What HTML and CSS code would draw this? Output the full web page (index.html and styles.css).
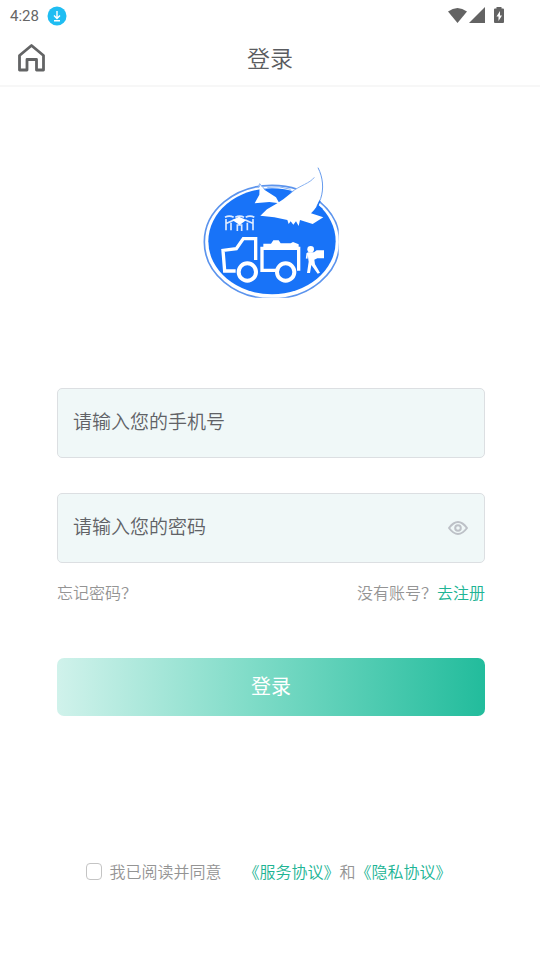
FILE: index.html
```
<!DOCTYPE html>
<html lang="zh-CN">
<head>
  <meta charset="UTF-8">
  <meta name="viewport" content="width=device-width, initial-scale=1.0">
  <title>登录</title>
  <link rel="stylesheet" href="styles.css">
</head>
<body>

  <div class="status-bar">
    <div class="status-left">
      <span class="time">4:28</span>
      <svg class="download" viewBox="0 0 20 20" width="20" height="20">
        <circle cx="10" cy="10" r="9.5" fill="#1fbdf2"/>
        <path d="M10 5v7M7 9.5l3 3 3-3M7 14.7h6" fill="none" stroke="#fff" stroke-width="1.4"/>
      </svg>
    </div>
    <svg class="status-icons" viewBox="0 0 57 18" width="57" height="18" fill="#636363">
      <path d="M0 4.5Q9.5-2.5 19 4.5L9.5 16z"/>
      <path d="M37 0v16H21z"/>
      <path d="M48.500 0h5v1.500h1.500q1 0 1 1V15q0 1-1 1h-8q-1 0-1-1V2.500q0-1 1-1h1.500z"/>
      <path d="M52 4l-3.500 5.500h2V14l3.500-5.500h-2z" fill="#fff"/>
    </svg>
  </div>

  <header class="header">
    <a class="home" href="#" aria-label="首页">
      <svg viewBox="0 0 28 28" width="28" height="28">
        <path d="M2.500 11.500L14.500 1.500l12 10V26h-7V15.500H10V26H2.500z" fill="none" stroke="#636465" stroke-width="2.800" stroke-linejoin="round"/>
      </svg>
    </a>
    <h1 class="title">登录</h1>
  </header>

  <main class="container">
    <svg class="logo" viewBox="0 0 450 435" width="150" height="145">
      <!-- oval badge -->
      <clipPath id="badge"><path d="M0 0h428v413H0z"/></clipPath>
      <g clip-path="url(#badge)">
        <ellipse cx="228" cy="246" rx="203" ry="170" fill="#fff" stroke="#5c94ed" stroke-width="5"/>
        <ellipse cx="228" cy="244" rx="191" ry="159" fill="#1873f8"/>
      </g>
      <!-- bird -->
      <path d="M191 73L206 90 240 112 250 130 220 126 176 130 190 104z" fill="#fff"/>
      <path d="M366 22C380 50 384 85 373 116 368 134 357 148 345 160L382 172 350 192 312 180 308 198 300 184 292 194 284 184 278 192 274 180 235 172 193 167 213 148 240 132 262 118 292 94C320 72 355 58 366 22z" fill="#fff"/>
      <path d="M366 23C381 52 384 86 374 116L362 140" fill="none" stroke="#669bed" stroke-width="3"/>
      <path d="M355 52C342 70 312 76 284 98M214 82Q250 76 284 88M186 84L191 71 208 90" fill="none" stroke="#8ab3f2" stroke-width="3"/>
      <path d="M372 122l-7 16 14 10" fill="none" stroke="#1873f8" stroke-width="4"/>
      <!-- drone -->
      <g fill="none" stroke="#dceaff" stroke-width="5">
        <path d="M87 172q13-7 26 0M118 172q13-7 26 0M149 172q13-7 26 0"/>
        <path d="M90 211v-34M105 188v23M124 213v-18h13v18M154 188v23M171 211v-34M92 190l22-10M148 180l22 10"/>
      </g>
      <path d="M109 180l20-10 22 10-20 15z" fill="#fff"/>
      <!-- truck -->
      <g fill="none" stroke="#fff" stroke-width="10">
        <path d="M119 333H86l-5-62 40-5 21-30h37v64M240 331h-42v-66h110v67"/>
        <circle cx="154" cy="336" r="26" stroke-width="12"/>
        <circle cx="269" cy="336" r="26" stroke-width="12"/>
      </g>
      <path d="M202 265v-14h23l7-10h16l6 9h30l7-4 17 7v15z" fill="#fff"/>
      <!-- courier -->
      <circle cx="344" cy="268" r="10" fill="#fff"/>
      <path d="M334 277h20l8-6h22v24h-20l-9 4 2 14 15 25-7 3-19-26-4 24h-9l5-34z" fill="#fff"/>
      <path d="M334 279l-2 17" stroke="#fff" stroke-width="5"/>
    </svg>

    <form class="login-form">
      <div class="field">
        <input type="tel" class="textbox" placeholder="请输入您的手机号" aria-label="手机号">
      </div>
      <div class="field">
        <input type="password" class="textbox" placeholder="请输入您的密码" aria-label="密码">
        <button type="button" class="show-password" aria-label="显示密码">
          <svg viewBox="0 0 22 16" width="22" height="16" fill="none" stroke="#bdc1c7" stroke-width="2">
            <path d="M2 8Q11-4 20 8 11 20 2 8z" stroke-linejoin="round"/>
            <circle cx="11" cy="8" r="2.800"/>
          </svg>
        </button>
      </div>

      <div class="links">
        <a class="forgot" href="#">忘记密码？</a>
        <span>没有账号？<a class="green" href="#">去注册</a></span>
      </div>

      <button type="submit" class="login-btn">登录</button>

      <div class="terms">
        <input type="checkbox" class="check" id="agree">
        <label for="agree">我已阅读并同意</label>
        <span class="agreements"><a class="green" href="#">《服务协议》</a>和<a class="green" href="#">《隐私协议》</a></span>
      </div>
    </form>
  </main>

</body>
</html>
```

FILE: styles.css
```
* {
  box-sizing: border-box;
}

body {
  margin: 0;
  font-family: "Noto Sans CJK SC", sans-serif;
  font-size: 16px;
  font-weight: 350;
  line-height: 24px;
  color: #949494;
  background: #fff;
}

a {
  color: inherit;
  text-decoration: none;
}

svg {
  display: block;
}

.status-bar {
  display: flex;
  justify-content: space-between;
  align-items: center;
  height: 31px;
  padding: 0 35px 0 10px;
}

.status-left {
  display: flex;
  align-items: center;
  gap: 8px;
}

.time {
  font-family: Roboto, sans-serif;
  font-size: 15px;
  font-weight: normal;
  color: #666;
}

.header {
  display: grid;
  grid-template-columns: 28px 1fr 28px;
  align-items: center;
  height: 56px;
  padding: 0 17px;
  border-bottom: 2px solid #f7f7f7;
}

.title {
  margin: 0;
  padding-bottom: 2px;
  font-size: 23px;
  font-weight: 350;
  line-height: 34px;
  text-align: center;
  color: #5a5c60;
}

.container {
  padding: 73px 55px 40px 57px;
}

.logo {
  margin: 0 auto 83px;
}

.field {
  position: relative;
  margin-bottom: 35px;
}

.textbox {
  display: block;
  width: 100%;
  height: 70px;
  padding: 0 15px 5px;
  font-family: inherit;
  font-size: 19px;
  font-weight: 350;
  color: #606266;
  background: #f0f8f8;
  border: 1px solid #dcdfe2;
  border-radius: 5px;
  outline: none;
}

.textbox::placeholder {
  color: #606266;
  opacity: 1;
}

.show-password {
  position: absolute;
  top: 50%;
  right: 16px;
  padding: 0;
  background: none;
  border: none;
  transform: translateY(-50%);
  cursor: pointer;
}

.links {
  display: flex;
  justify-content: space-between;
  margin-top: -18px;
}

.green {
  color: #20b494;
}

.login-btn {
  display: block;
  width: 100%;
  height: 58px;
  margin-top: 54px;
  padding: 0 0 4px;
  font-family: inherit;
  font-size: 20px;
  font-weight: 400;
  color: #fff;
  background: linear-gradient(to right, #d0f2eb, #80dcc8 45%, #22bc9c);
  border: none;
  border-radius: 7px;
  cursor: pointer;
}

.terms {
  display: flex;
  justify-content: center;
  align-items: center;
  margin-top: 143px;
  padding-right: 4px;
}

.check {
  width: 16px;
  height: 17px;
  margin: 0 7px 0 0;
  appearance: none;
  background: #fff;
  border: 1px solid #c4c4c4;
  border-radius: 4px;
}

.check:checked {
  background: #26b899;
}

.agreements {
  margin-left: 22px;
}
```
